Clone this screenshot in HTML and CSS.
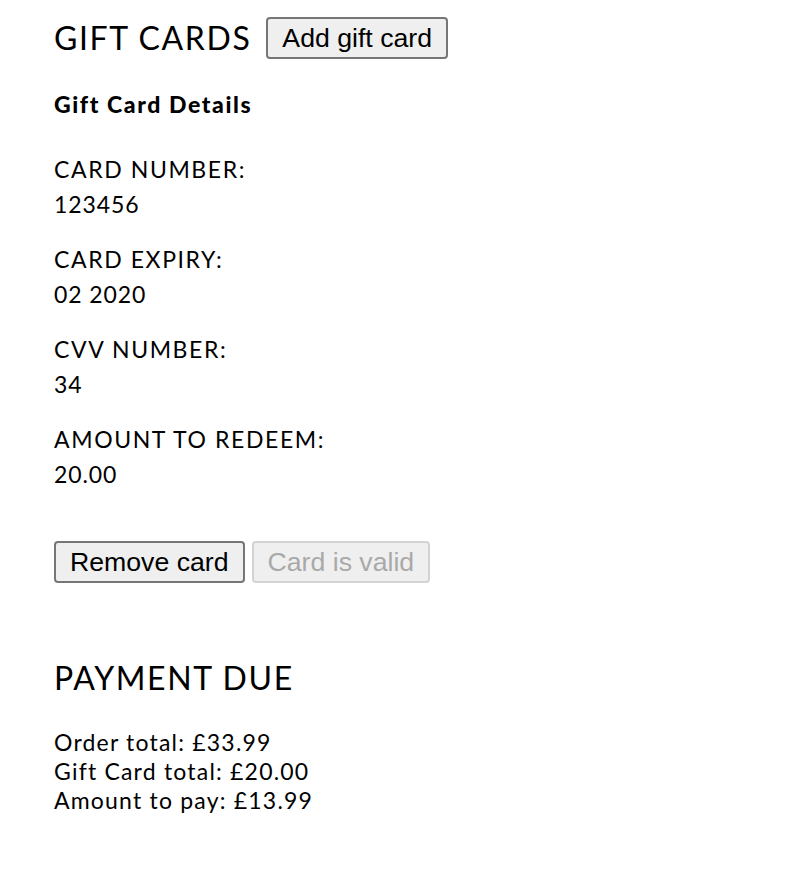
FILE: index.html
```html
<!DOCTYPE html>
<html>
<head>
<meta charset="utf-8">
<link rel="stylesheet" href="styles.css">
</head>
<body>
<div class="page">
  <div class="title-row">
    <h1 class="title">GIFT CARDS</h1>
    <button class="btn">Add gift card</button>
  </div>
  <h2 class="subtitle">Gift Card Details</h2>
  <dl class="fields">
    <div class="field"><dt>CARD NUMBER:</dt><dd>123456</dd></div>
    <div class="field"><dt>CARD EXPIRY:</dt><dd>02 2020</dd></div>
    <div class="field"><dt>CVV NUMBER:</dt><dd>34</dd></div>
    <div class="field"><dt>AMOUNT TO REDEEM:</dt><dd>20.00</dd></div>
  </dl>
  <div class="actions">
    <button class="btn">Remove card</button>
    <button class="btn" disabled>Card is valid</button>
  </div>
  <h1 class="title payment">PAYMENT DUE</h1>
  <div class="summary">
    <div>Order total: £33.99</div>
    <div>Gift Card total: £20.00</div>
    <div>Amount to pay: £13.99</div>
  </div>
</div>
</body>
</html>
```
FILE: styles.css
```css
html, body {
  margin: 0;
  padding: 0;
  background: #fff;
}
body {
  font-family: "Lato", "Noto Sans", sans-serif;
  color: #000;
}
.page {
  padding: 17px 0 0 54px;
}
.title-row {
  display: flex;
  align-items: center;
  gap: 15px;
  height: 42px;
}
.title {
  margin: 0;
  font-size: 32px;
  font-weight: 400;
  letter-spacing: 1.6px;
  line-height: 42px;
}
.btn {
  font-family: "Liberation Sans", Arial, sans-serif;
  font-size: 26.67px;
  height: 42px;
  padding: 0 14px;
  background: #efefef;
  color: #000;
  border: 2px solid #767676;
  border-radius: 4px;
  line-height: 1;
}
.btn:disabled {
  color: #a9a9a9;
  border-color: #d3d3d3;
  background: #efefef;
}
.subtitle {
  margin: 30px 0 0;
  font-size: 23px;
  font-weight: 900;
  letter-spacing: 1.6px;
  line-height: 30px;
}
.fields {
  margin: 33px 0 0;
}
.field {
  margin-bottom: 20px;
}
.field dt, .field dd {
  margin: 0;
  font-size: 23px;
  line-height: 35px;
  letter-spacing: 1.6px;
}
.field dd {
  letter-spacing: 0.9px;
}
.actions {
  margin-top: 49px;
  display: flex;
  gap: 7px;
}
.payment {
  margin-top: 75px;
  line-height: 40px;
}
.summary {
  margin-top: 30px;
  font-size: 23px;
  letter-spacing: 1.2px;
  line-height: 29px;
}
```
